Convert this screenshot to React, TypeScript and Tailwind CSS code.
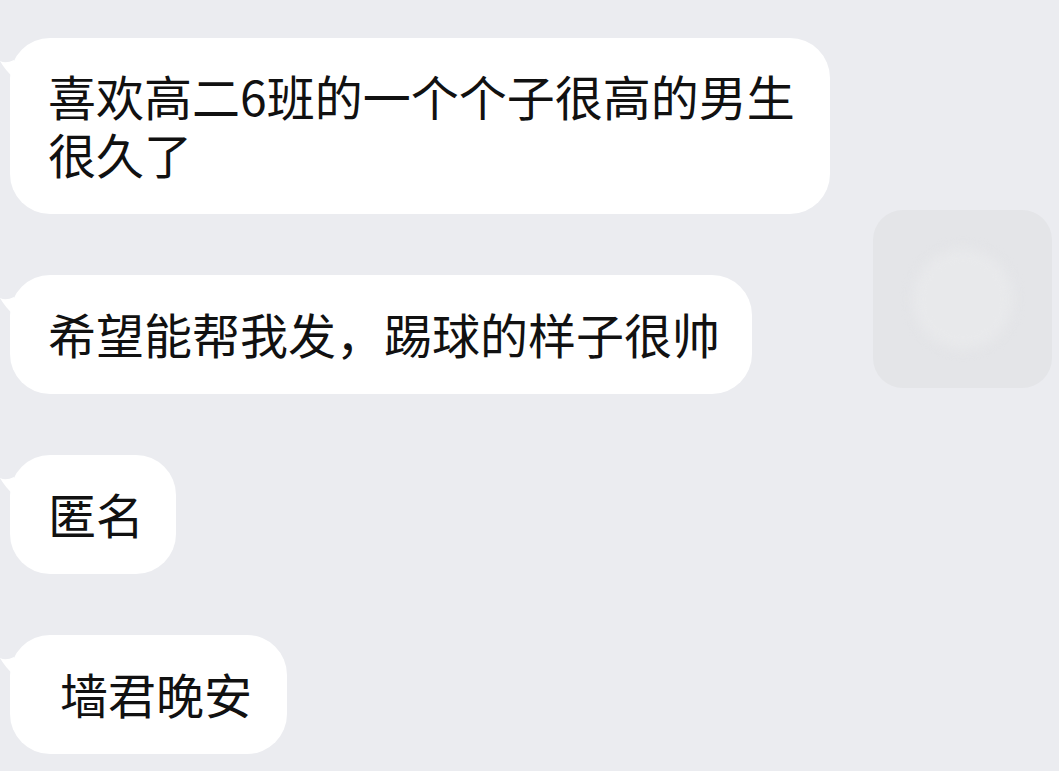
import React from "react";

const font = '"Noto Sans CJK SC", "Noto Sans", sans-serif';

function Tail() {
  return (
    <svg
      className="absolute left-[-10px] top-[20px]"
      width="14"
      height="22"
      viewBox="0 0 14 22"
    >
      <path d="M14 2 Q 6 6 0 3 Q 5 12 14 20 Z" fill="#ffffff" />
    </svg>
  );
}

function Bubble({
  children,
  className,
}: {
  children: React.ReactNode;
  className: string;
}) {
  return (
    <div className={`relative bg-white rounded-[40px] text-[48px] leading-[58px] text-[#111111] whitespace-nowrap ${className}`}>
      <Tail />
      {children}
    </div>
  );
}

export default function App() {
  return (
    <div
      className="relative w-[1059px] h-[771px] bg-[#ebecf0] overflow-hidden"
      style={{ fontFamily: font }}
    >
      <div className="absolute left-[873px] top-[210px] w-[179px] h-[178px] rounded-[30px] bg-[#e4e5e8] flex items-center justify-center">
        <div className="w-[100px] h-[100px] rounded-full bg-[#e8e9eb] blur-[6px]" />
      </div>
      <div className="flex flex-col items-start gap-[61px] pt-[38px] pl-[10px]">
        <Bubble className="w-[820px] h-[176px] pl-[38px] pt-[28px]">
          <p>
            喜欢高二6班的一个个子很高的男生
            <br />
            很久了
          </p>
        </Bubble>
        <Bubble className="w-[742px] h-[119px] pl-[38px] pt-[29px]">
          <p>希望能帮我发，踢球的样子很帅</p>
        </Bubble>
        <Bubble className="w-[166px] h-[119px] pl-[38px] pt-[29px]">
          <p>匿名</p>
        </Bubble>
        <Bubble className="w-[277px] h-[119px] pl-[50px] pt-[29px]">
          <p>墙君晚安</p>
        </Bubble>
      </div>
    </div>
  );
}
